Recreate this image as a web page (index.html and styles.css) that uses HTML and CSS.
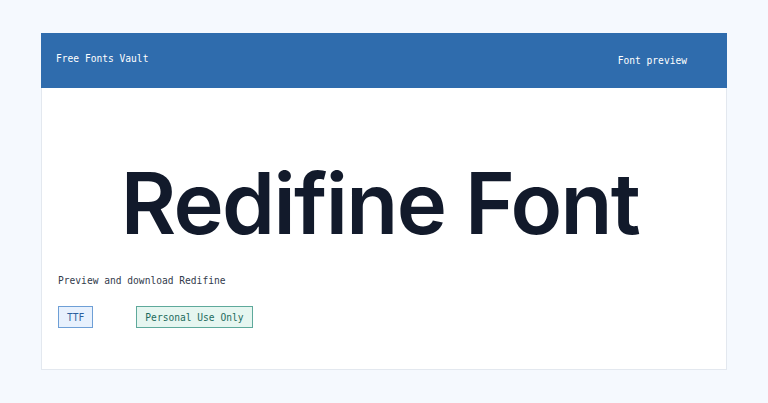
FILE: index.html
```html
<!DOCTYPE html>
<html lang="en">
<head>
<meta charset="utf-8">
<title>Redifine Font - Free Fonts Vault</title>
<link rel="stylesheet" href="styles.css">
</head>
<body>
  <main class="card">
    <header class="topbar">
      <span class="brand">Free Fonts Vault</span>
      <span class="section">Font preview</span>
    </header>
    <section class="content">
      <h1 class="sample">Redifine Font</h1>
      <p class="lead">Preview and download Redifine</p>
      <div class="tags">
        <span class="tag tag-format">TTF</span>
        <span class="tag tag-license">Personal Use Only</span>
      </div>
    </section>
  </main>
</body>
</html>
```

FILE: styles.css
```css
html, body {
  margin: 0;
  padding: 0;
}

body {
  background: #f5f9fe;
  font-family: "DejaVu Sans Mono", "Liberation Mono", monospace;
  font-size: 9.6px;
  padding: 33px 41px;
  height: 403px;
  box-sizing: border-box;
}

.card {
  background: #ffffff;
  border: 1px solid #e3e8ef;
  border-top: 0;
  height: 337px;
  box-sizing: border-box;
  display: flex;
  flex-direction: column;
}

.topbar {
  background: #2f6cad;
  color: #ffffff;
  height: 55px;
  margin: 0 -1px;
  display: flex;
  align-items: center;
  justify-content: space-between;
  padding: 0 40px 0 15px;
}

.brand {
  margin-top: -4px;
}

.section {
  margin-top: -1px;
}

.content {
  display: flex;
  flex-direction: column;
  padding: 0 16px;
}

.sample {
  margin: 0;
  padding: 66px 8px 0 0;
  font-family: Inter, Roboto, "Liberation Sans", Arial, sans-serif;
  font-weight: 600;
  font-size: 85px;
  line-height: 100px;
  letter-spacing: -0.02em;
  font-variant-ligatures: none;
  color: #121a2b;
  text-align: center;
}

.lead {
  margin: 0;
  margin-top: 20px;
  color: #333b4c;
  line-height: 14px;
}

.tags {
  display: flex;
  gap: 43px;
  margin-top: 18px;
}

.tag {
  display: inline-flex;
  align-items: center;
  height: 22px;
  padding: 0 8px;
  box-sizing: border-box;
  border: 1px solid;
}

.tag-format {
  background: #e8f1fd;
  border-color: #6e9fd6;
  color: #2c5f9e;
}

.tag-license {
  background: #e6f6f0;
  border-color: #5ea99b;
  color: #1d6b5c;
}
```
